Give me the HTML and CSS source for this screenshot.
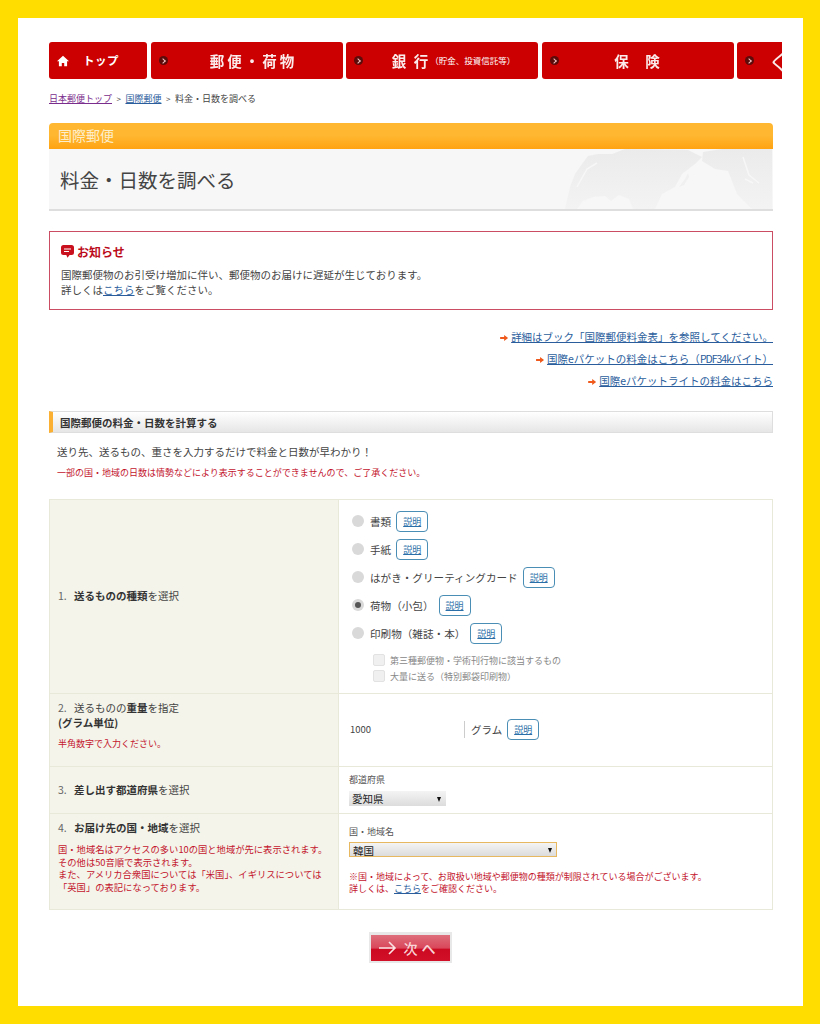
FILE: index.html
```html
<!DOCTYPE html>
<html lang="ja">

<head>
    <meta charset="UTF-8">
    <meta name="viewport" content="width=device-width, initial-scale=1.0">
    <title>料金・日数を調べる</title>
    <link rel="stylesheet" href="styles.css">
</head>

<body>
    <div class="page">
        <nav class="gnb">
            <a class="gnb_top" href="#">
                <svg class="home" viewBox="0 0 12 12"><path d="M6 .8 0 6.300h1.900v5h2.900V7.900h2.400v3.400h2.900v-5H12z" fill="#fff"/></svg>
                <span>トップ</span>
            </a>
            <a class="gnb_item gnb_post" href="#"><i class="dot"></i><span class="wide">郵便・荷物</span></a>
            <a class="gnb_item" href="#"><i class="dot"></i><span class="wide bank">銀 行</span><small>（貯金、投資信託等）</small></a>
            <a class="gnb_item" href="#"><i class="dot"></i><span class="wide ins">保　険</span></a>
            <a class="gnb_item gnb_cut" href="#"><i class="dot"></i><span class="wide">く</span></a>
        </nav><!-- .gnb end -->

        <main class="inner">
            <p class="crumb">
                <a class="visited" href="#">日本郵便トップ</a><span class="sep">&gt;</span><a href="#">国際郵便</a><span class="sep">&gt;</span>料金・日数を調べる
            </p>

            <header class="title">
                <p class="title_cat">国際郵便</p>
                <div class="title_main">
                    <h1>料金・日数を調べる</h1>
                    <svg class="map" viewBox="0 0 210 60" preserveAspectRatio="none">
                        <defs>
                            <linearGradient id="land" x1="0" y1="0" x2="0" y2="1">
                                <stop offset="0" stop-color="#ebebeb"/>
                                <stop offset="1" stop-color="#f3f3f3"/>
                            </linearGradient>
                        </defs>
                        <path fill="url(#land)" d="M2 60 7 38 12 25 19 15 25 7 35 5H49L62 0 125 1 139 8 132 15 119 25 112 38 99 45 92 60H70L66 50 56 46 48 52 42 47 30 48 20 52 14 60z"/>
                        <path fill="url(#land)" d="M140 3 159 0H209V60H189L174 45 169 32 165 22 152 20 139 12z"/>
                        <path fill="#f0f0f0" d="M116 38 122 30 125 24 126 28 121 36z"/>
                        <path fill="none" stroke="#f7f7f7" stroke-width="1.500" d="M14 38 24 20 34 14M180 8 186 26 196 34M182 30 190 34"/>
                    </svg>
                </div>
            </header>

            <section class="notice">
                <h2>
                    <svg class="balloon" viewBox="0 0 13 13"><path d="M2.500 0h8A2.500 2.500 0 0 1 13 2.500v5A2.500 2.500 0 0 1 10.500 10H8.600L6.500 12.800 5.300 10H2.500A2.500 2.500 0 0 1 0 7.500v-5A2.500 2.500 0 0 1 2.500 0z" fill="#c8101e"/><path d="M3 3.500h7v1H3zM3 6h5v1H3z" fill="#fff"/></svg>
                    お知らせ
                </h2>
                <p>国際郵便物のお引受け増加に伴い、郵便物のお届けに遅延が生じております。<br>詳しくは<a href="#">こちら</a>をご覧ください。</p>
            </section><!-- .notice end -->

            <ul class="links">
                <li><a href="#">詳細はブック「国際郵便料金表」を参照してください。</a></li>
                <li><a href="#">国際eパケットの料金はこちら（<span class="latin">PDF34k</span>バイト）</a></li>
                <li><a href="#">国際eパケットライトの料金はこちら</a></li>
            </ul>

            <h2 class="sec_title">国際郵便の料金・日数を計算する</h2>
            <p class="lead">送り先、送るもの、重さを入力するだけで料金と日数が早わかり！</p>
            <p class="lead_note">一部の国・地域の日数は情勢などにより表示することができませんので、ご了承ください。</p>

            <form>
                <table class="calc">
                    <tr class="row1">
                        <th><span class="no">1.</span><b>送るものの種類</b>を選択</th>
                        <td>
                            <label class="opt"><input type="radio" name="kind"><span>書類</span><a class="help" href="#">説明</a></label>
                            <label class="opt"><input type="radio" name="kind"><span>手紙</span><a class="help" href="#">説明</a></label>
                            <label class="opt"><input type="radio" name="kind"><span>はがき・グリーティングカード</span><a class="help" href="#">説明</a></label>
                            <label class="opt"><input type="radio" name="kind" checked><span>荷物（小包）</span><a class="help" href="#">説明</a></label>
                            <label class="opt"><input type="radio" name="kind"><span>印刷物（雑誌・本）</span><a class="help" href="#">説明</a></label>
                            <label class="sub"><input type="checkbox"><span>第三種郵便物・学術刊行物に該当するもの</span></label>
                            <label class="sub"><input type="checkbox"><span>大量に送る（特別郵袋印刷物）</span></label>
                        </td>
                    </tr>
                    <tr class="row2">
                        <th>
                            <span class="no">2.</span>送るものの<b>重量</b>を指定<br><b>(グラム単位)</b>
                            <p class="note note_gap">半角数字で入力ください。</p>
                        </th>
                        <td>
                            <div class="weight">
                                <input type="text" value="1000">
                                <span>グラム</span>
                                <a class="help" href="#">説明</a>
                            </div>
                        </td>
                    </tr>
                    <tr class="row3">
                        <th><span class="no">3.</span><b>差し出す都道府県</b>を選択</th>
                        <td>
                            <p class="field">都道府県</p>
                            <div class="select select_s">
                                <select><option>愛知県</option></select>
                            </div>
                        </td>
                    </tr>
                    <tr class="row4">
                        <th>
                            <span class="no">4.</span><b>お届け先の国・地域</b>を選択
                            <p class="note note_list">国・地域名はアクセスの多い10の国と地域が先に表示されます。<br>その他は50音順で表示されます。<br>また、アメリカ合衆国については「米国」、イギリスについては<br>「英国」の表記になっております。</p>
                        </th>
                        <td>
                            <p class="field">国・地域名</p>
                            <div class="select select_l">
                                <select><option>韓国</option></select>
                            </div>
                            <p class="note note_dest">※国・地域によって、お取扱い地域や郵便物の種類が制限されている場合がございます。<br>詳しくは、<a href="#">こちら</a>をご確認ください。</p>
                        </td>
                    </tr>
                </table>

                <div class="next_wrap">
                    <button class="next" type="button">
                        <svg viewBox="0 0 18 14"><path d="M0 7h16M10 1l6 6-6 6" fill="none" stroke="#fbe3e3" stroke-width="1.600"/></svg>
                        <span>次へ</span>
                    </button>
                </div>
            </form>
        </main>
    </div><!-- .page end -->
</body>

</html>
```

FILE: styles.css
```css
@charset "utf-8";

* {
    margin: 0;
    padding: 0;
    box-sizing: border-box;
}

li {
    list-style: none;
}

a {
    color: #2a5d9c;
}

body {
    background-color: #ffdd00;
    color: #444;
    font-family: "Noto Sans CJK JP", "Liberation Sans", sans-serif;
    font-size: 10.5px;
    line-height: 15px;
}

.page {
    width: 785px;
    height: 988px;
    margin: 18px;
    padding: 24px 21px 0 31px;
    background-color: #fff;
    overflow: hidden;
}

/* gnb */
.gnb {
    display: flex;
    gap: 3.5px;
    height: 37px;
    overflow: hidden;
}

.gnb a {
    flex: none;
    display: flex;
    align-items: center;
    height: 37px;
    border-radius: 3px;
    background-color: #cc0000;
    color: #fff;
    text-decoration: none;
    font-weight: 700;
}

.gnb_top {
    width: 98px;
    padding-left: 8px;
    font-size: 11.5px;
    letter-spacing: 0.5px;
}

.gnb_top .home {
    width: 12px;
    height: 12px;
    margin-right: 14px;
}

.gnb_item {
    position: relative;
    width: 192px;
    justify-content: center;
}

.gnb_post {
    padding-left: 14px;
}

.gnb_cut {
    width: 60px;
    justify-content: flex-start;
    padding-left: 31px;
    border-radius: 3px 0 0 3px;
}

.dot {
    position: absolute;
    left: 8px;
    top: 14px;
    width: 9px;
    height: 9px;
    border-radius: 50%;
    background-color: #5c0a0a;
}

.dot::after {
    content: "";
    position: absolute;
    left: 2px;
    top: 3px;
    width: 3px;
    height: 3px;
    border-top: 1px solid #f3c6c6;
    border-right: 1px solid #f3c6c6;
    transform: rotate(45deg);
}

.wide {
    font-size: 14.500px;
    letter-spacing: 3px;
    opacity: 0.92;
}

.bank {
    letter-spacing: 2px;
    margin-left: 23px;
}

.ins {
    letter-spacing: 1px;
}

.gnb small {
    font-size: 8.500px;
    font-weight: 400;
    white-space: nowrap;
}

.gnb_cut .wide {
    font-size: 22px;
    font-weight: 400;
}

/* main */
.inner {
    width: 724px;
}

.crumb {
    margin-top: 12px;
    height: 15px;
    font-size: 9px;
    color: #444;
}

.crumb .visited {
    color: #7a2d8c;
}

.crumb .sep {
    margin: 0 4.500px;
    font-size: 8px;
}

/* title */
.title {
    margin-top: 17px;
}

.title_cat {
    height: 26px;
    padding-left: 9px;
    border-radius: 4px 4px 0 0;
    background: linear-gradient(#ffb630 0, #ffb630 50%, #ffa312 100%);
    color: #fdeecb;
    font-size: 14px;
    line-height: 25px;
}

.title_main {
    position: relative;
    height: 62px;
    padding-left: 11px;
    border-bottom: 2px solid #dedede;
    background-color: #f7f7f7;
}

.title_main h1 {
    position: relative;
    z-index: 1;
    font-size: 19.500px;
    font-weight: 400;
    line-height: 62px;
    color: #444;
}

.map {
    position: absolute;
    top: 0;
    right: 0;
    width: 210px;
    height: 60px;
    filter: blur(0.6px);
}

/* notice */
.notice {
    height: 79px;
    margin-top: 20px;
    padding: 11px 11px 0;
    border: 1px solid #cb4d63;
}

.notice h2 {
    display: flex;
    align-items: center;
    gap: 3px;
    height: 17px;
    margin-bottom: 7px;
    color: #bb0b1b;
    font-size: 12px;
    font-weight: 700;
}

.balloon {
    width: 13px;
    height: 13px;
}

/* links */
.links {
    margin-top: 16px;
    text-align: right;
}

.links li {
    height: 22px;
    line-height: 22px;
}

.links li::before {
    content: "";
    display: inline-block;
    width: 8px;
    height: 6px;
    margin-right: 3px;
    vertical-align: 0;
    background-color: #ef5a1c;
    clip-path: polygon(0 33%, 50% 33%, 50% 0, 100% 50%, 50% 100%, 50% 67%, 0 67%);
}

.latin {
    letter-spacing: -1px;
}

/* section */
.sec_title {
    height: 22px;
    margin-top: 19px;
    padding-left: 7px;
    border: 1px solid #dedede;
    border-left: 4px solid #fbb034;
    background: linear-gradient(#fff, #e6e6e6);
    color: #333;
    font-size: 10.500px;
    font-weight: 700;
    line-height: 21px;
}

.lead {
    margin-top: 11px;
    padding-left: 8px;
}

.lead_note {
    margin-top: 6px;
    padding-left: 8px;
    color: #c3142d;
    font-size: 9px;
}

/* table */
.calc {
    width: 724px;
    margin-top: 19px;
    border-collapse: collapse;
    table-layout: fixed;
}

.calc th,
.calc td {
    border: 1px solid #e9e9da;
    vertical-align: middle;
    text-align: left;
    font-weight: 400;
}

.calc th {
    width: 289px;
    padding-left: 8px;
    background-color: #f4f4ea;
}

.calc td {
    padding-left: 10px;
}

.calc b {
    font-weight: 700;
    color: #333;
}

.no {
    display: inline-block;
    width: 16px;
    color: #666;
}

.row1 {
    height: 194px;
}

.row1 th,
.row1 td {
    padding-bottom: 2px;
}

.row2 {
    height: 73px;
}

.row2 th {
    vertical-align: top;
    padding-top: 6px;
}

.row2 td {
    padding-bottom: 2px;
}

.row3 {
    height: 47px;
}

.row3 th,
.row3 td {
    padding-bottom: 2px;
}

.row4 {
    height: 96px;
}

.row4 th {
    vertical-align: top;
    padding-top: 6px;
}

.row4 td {
    padding-bottom: 3px;
}

.note {
    color: #c3142d;
    font-size: 9px;
    line-height: 12.500px;
}

.note_gap {
    margin-top: 8px;
}

.note_list {
    margin-top: 8px;
    font-size: 9.300px;
}

.note_dest {
    margin-top: 14px;
}

.opt {
    display: flex;
    align-items: center;
    height: 28px;
    padding-left: 3px;
    font-size: 10.600px;
}

.opt input {
    appearance: none;
    flex: none;
    position: relative;
    width: 12px;
    height: 12px;
    margin-right: 6px;
    border-radius: 50%;
    background-color: #d9d9d9;
}

.opt input:checked::after {
    content: "";
    position: absolute;
    left: 3px;
    top: 3px;
    width: 6px;
    height: 6px;
    border-radius: 50%;
    background-color: #555;
}

.help {
    flex: none;
    display: inline-block;
    width: 32px;
    height: 21px;
    margin-left: 5px;
    border: 1px solid #4a8db5;
    border-radius: 4px;
    background-color: #fff;
    color: #2a6fa8;
    font-size: 9px;
    line-height: 19px;
    text-align: center;
}

.sub {
    display: flex;
    align-items: center;
    height: 16px;
    padding-left: 24px;
    color: #888;
    font-size: 9px;
}

.opt + .sub {
    margin-top: 5px;
}

.sub input {
    appearance: none;
    width: 12px;
    height: 12px;
    margin-right: 5px;
    border: 1px solid #e2e2e2;
    border-radius: 2px;
    background-color: #f0f0f0;
}

.weight {
    display: flex;
    align-items: center;
}

.weight input {
    width: 116px;
    height: 17px;
    padding-left: 1px;
    border: 0;
    border-right: 1px solid #ccc;
    color: #444;
    font-family: inherit;
    font-size: 9.500px;
}

.weight span {
    margin-left: 6px;
}

.weight .help {
    margin-left: 5px;
}

.field {
    font-size: 9px;
    line-height: 13px;
    color: #555;
}

.select {
    position: relative;
    margin-top: 5px;
}

.select_l {
    margin-top: 4px;
}

.select select {
    appearance: none;
    display: block;
    width: 100%;
    height: 15px;
    padding-left: 3px;
    border: 0;
    border-radius: 0;
    background: linear-gradient(#f4f4f4, #dcdcdc);
    color: #222;
    font-family: inherit;
    font-size: 10.500px;
    line-height: 15px;
}

.select::after {
    content: "";
    position: absolute;
    right: 5px;
    top: 6px;
    border-top: 5px solid #111;
    border-left: 2.500px solid transparent;
    border-right: 2.500px solid transparent;
}

.select_s {
    width: 97px;
}

.select_l {
    width: 208px;
}

.select_l select {
    border: 1px solid #e8b860;
}

/* next */
.next_wrap {
    display: flex;
    margin-top: 22px;
    padding-left: 320px;
}

.next {
    display: flex;
    align-items: center;
    justify-content: center;
    gap: 7px;
    width: 83px;
    height: 31px;
    padding-right: 3px;
    border: 2px solid #e8e8e8;
    border-top-width: 3px;
    background: linear-gradient(#de6f7c, #d9475a 50%, #cc0a22 55%, #d21027);
    color: #f9d5d8;
    font-family: inherit;
    font-size: 14px;
    font-weight: 500;
    letter-spacing: 4px;
}

.next svg {
    width: 18px;
    height: 14px;
}
```
